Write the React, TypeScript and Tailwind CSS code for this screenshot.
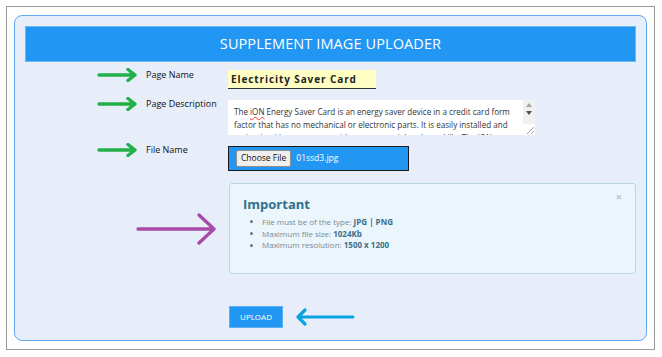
import React from 'react';

const font = { fontFamily: '"Open Sans", "Liberation Sans", sans-serif' };

const GreenArrow: React.FC = () => (
    <svg width="42" height="14" viewBox="0 0 42 14" className="block">
        <path d="M2 7 H38 M31 1.5 L38 7 L31 12.5" stroke="#22b04a" strokeWidth="3.4" fill="none"
              strokeLinecap="round" strokeLinejoin="round"/>
    </svg>
);

const FormRow: React.FC<{ label: string; children: React.ReactNode; shift: number }> = ({
                                                                                         label,
                                                                                         children,
                                                                                         shift,
                                                                                     }) => (
    <div className="flex items-start">
        <div className="w-[49px]" style={{marginTop: shift}}>
            <GreenArrow/>
        </div>
        <div className="w-[82px] text-[9px] leading-[14px] font-normal text-[#111]" style={{marginTop: shift}}>
            {label}
        </div>
        {children}
    </div>
);

export default function App() {
    return (
        <div className="w-[662px] h-[357px] bg-white pt-[6px] pl-[6px]" style={font}>
            <div className="w-[649px] h-[344px] border border-[#9a9a9a] bg-white pt-[8px] pl-[7px]">
                <div className="w-[633px] h-[326px] rounded-[8px] border border-[#62a9f4] bg-[#e8eef9] pt-[10px] px-[10px]">
                    <div className="h-[36px] bg-[#2196f3] border border-[#6cb6f6] flex items-center justify-center text-white text-[14.5px] tracking-[0.1px]">
                        SUPPLEMENT IMAGE UPLOADER
                    </div>

                    <div className="pl-[72px] pt-[8px] flex flex-col">
                        <FormRow label="Page Name" shift={-2}>
                            <div className="w-[148px] h-[19px] bg-[#ffffc4] border-b border-[#333] flex items-center pl-[3px] text-[10px] font-bold tracking-[0.9px] text-[#222]">
                                Electricity Saver Card
                            </div>
                        </FormRow>

                        <div className="h-[11px]"/>
                        <FormRow label="Page Description" shift={-3}>
                            <div className="w-[307px] h-[35px] bg-white flex overflow-hidden">
                                <div className="flex-1 pl-[6px] pt-[5px] text-[8.1px] leading-[13px] text-[#333] whitespace-nowrap overflow-hidden">
                                    <div>The <span className="underline decoration-wavy decoration-red-500 decoration-[0.5px]">iON</span> Energy Saver Card is an energy saver device in a credit card form</div>
                                    <div>factor that has no mechanical or electronic parts. It is easily installed and</div>
                                    <div>maintained by consumers without any special tools or skills. The iON</div>
                                </div>
                                <div className="w-[12px] bg-[#f1f1f1] flex flex-col items-center">
                                    <div className="mt-[3px] w-0 h-0 border-l-[3px] border-r-[3px] border-b-[4px] border-l-transparent border-r-transparent border-b-[#a3a3a3]"/>
                                    <div className="mt-[4px] w-0 h-0 border-l-[3px] border-r-[3px] border-t-[4px] border-l-transparent border-r-transparent border-t-[#505050]"/>
                                    <div className="mt-auto w-full h-[11px] bg-white relative">
                                        <svg width="12" height="11" viewBox="0 0 12 11" className="absolute inset-0">
                                            <path d="M4 10 L11 3 M8 10 L11 7" stroke="#888" strokeWidth="0.8"/>
                                        </svg>
                                    </div>
                                </div>
                            </div>
                        </FormRow>

                        <div className="h-[11px]"/>
                        <FormRow label="File Name" shift={-3}>
                            <div className="w-[181px] h-[25px] bg-[#2196f3] border border-[#1a1a1a] flex items-center pl-[7px] gap-[5px]">
                                <div className="h-[17px] px-[4px] bg-[#efefef] border border-[#8f8f8f] rounded-[2px] flex items-center text-[8.5px] text-[#111]">
                                    Choose File
                                </div>
                                <span className="text-[8.5px] text-white">01ssd3.jpg</span>
                            </div>
                        </FormRow>

                        <div className="h-[12px]"/>
                        <div className="flex items-center">
                            <div className="w-[132px] flex justify-end pr-[11px]">
                                <svg width="82" height="34" viewBox="0 0 82 34" className="block">
                                    <path d="M2 17 H78 M63 3 L78 17 L63 31" stroke="#a64ca8" strokeWidth="3.4" fill="none"
                                          strokeLinecap="round" strokeLinejoin="round"/>
                                </svg>
                            </div>
                            <div className="w-[407px] h-[91px] bg-[#eaf5fc] border border-[#bad6e4] rounded-[3px] relative pl-[13px] pt-[11px]">
                                <span className="absolute right-[13px] top-[7px] text-[11px] font-bold text-[#b6c9d3] leading-none">×</span>
                                <div className="text-[13px] font-bold text-[#31708f] leading-[18px]">Important</div>
                                <ul className="mt-[3px] pl-[7px] text-[8px] leading-[11.7px] text-[#7a8a93]">
                                    <li className="flex items-center gap-[9px]">
                                        <span className="w-[3px] h-[3px] rounded-full bg-[#5b7684]"/>
                                        <span>File must be of the type: <b className="text-[#3d6f89]">JPG | PNG</b></span>
                                    </li>
                                    <li className="flex items-center gap-[9px]">
                                        <span className="w-[3px] h-[3px] rounded-full bg-[#5b7684]"/>
                                        <span>Maximum file size: <b className="text-[#3d6f89]">1024Kb</b></span>
                                    </li>
                                    <li className="flex items-center gap-[9px]">
                                        <span className="w-[3px] h-[3px] rounded-full bg-[#5b7684]"/>
                                        <span>Maximum resolution: <b className="text-[#3d6f89]">1500 x 1200</b></span>
                                    </li>
                                </ul>
                            </div>
                        </div>

                        <div className="h-[32px]"/>
                        <div className="flex items-center">
                            <div className="w-[132px]"/>
                            <div className="w-[54px] h-[22px] bg-[#2196f3] border border-[#5fb0f5] flex items-center justify-center text-[8px] text-white">
                                UPLOAD
                            </div>
                            <svg width="62" height="20" viewBox="0 0 62 20" className="block ml-[11px]">
                                <path d="M4 10 H59 M11 3 L4 10 L11 17" stroke="#0aa4e4" strokeWidth="3.2" fill="none"
                                      strokeLinecap="round" strokeLinejoin="round"/>
                            </svg>
                        </div>
                    </div>
                </div>
            </div>
        </div>
    );
}
